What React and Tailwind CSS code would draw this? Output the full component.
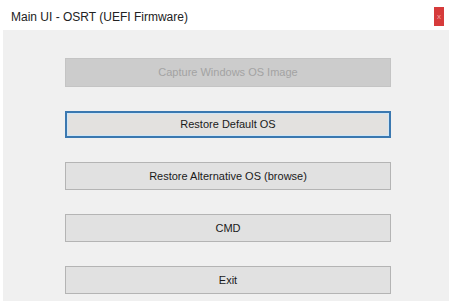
import React from 'react';

const buttons = [
    { label: 'Capture Windows OS Image', disabled: true },
    { label: 'Restore Default OS', focused: true },
    { label: 'Restore Alternative OS (browse)' },
    { label: 'CMD' },
    { label: 'Exit' },
];

const WinButton = ({ label, disabled, focused }) => {
    if (disabled) {
        return (
            <button className="h-[29px] w-[326px] bg-[#cccccc] border border-[#c4c4c4] text-[11px] text-[#a3a3a3]">
                {label}
            </button>
        );
    }
    if (focused) {
        return (
            <button className="h-[27px] w-[326px] bg-[#e3e1df] border-2 border-[#3b78b0] text-[11px] text-[#1a1a1a] shadow-[inset_0_0_0_1px_#cfe6f7]">
                {label}
            </button>
        );
    }
    return (
        <button className="h-[28px] w-[326px] bg-[#e1e1e1] border border-[#b4b4b4] text-[11px] text-[#1a1a1a]">
            {label}
        </button>
    );
};

const App = () => {
    return (
        <div className="w-[454px] h-[301px] bg-white flex flex-col overflow-hidden font-['Liberation_Sans',Arial,sans-serif]">
            <div className="h-[30px] flex justify-between items-start">
                <div className="pl-[11px] pt-[8px] text-[12px] text-[#222]">Main UI - OSRT (UEFI Firmware)</div>
                <div className="mt-[7px] mr-[10px] w-[10px] h-[19px] bg-[#d63b3b] flex items-center justify-center text-[8px] leading-none text-[#f3a5a5]">
                    x
                </div>
            </div>
            <div className="flex-1 ml-[3px] mr-[5px] bg-[#f0f0f0] pl-[62px] pt-[28px] flex flex-col gap-[24px]">
                {buttons.map((b) => (
                    <WinButton key={b.label} {...b} />
                ))}
            </div>
        </div>
    );
};

export default App;
